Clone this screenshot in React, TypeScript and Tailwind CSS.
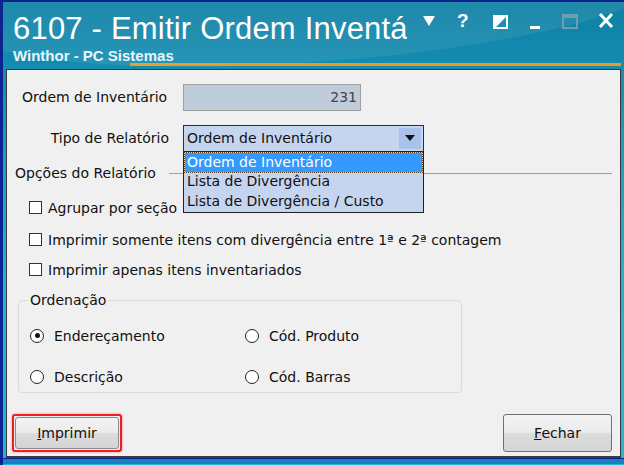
import React from "react";

const font = { fontFamily: '"Liberation Sans", Arial, sans-serif' };
const uiFont = { fontFamily: '"DejaVu Sans", Verdana, sans-serif' };

function Checkbox({ label }: { label: string }) {
  return (
    <div className="flex items-center h-[20px]">
      <div className="w-[13px] h-[13px] border border-[#333] bg-white ml-[22px]" />
      <span className="ml-[6px] pt-[1px] text-[14px] text-[#111] leading-none">{label}</span>
    </div>
  );
}

function Radio({ label, checked }: { label: string; checked?: boolean }) {
  return (
    <div className="flex items-center">
      <div className="w-[14px] h-[14px] rounded-full border border-[#222] bg-white flex items-center justify-center">
        {checked && <div className="w-[5px] h-[5px] rounded-full bg-[#111]" />}
      </div>
      <span className="ml-[10px] pt-[1px] text-[14px] text-[#111] leading-none">{label}</span>
    </div>
  );
}

export default function App() {
  return (
    <div
      className="w-[624px] h-[465px] relative overflow-hidden bg-[#1c9cc0] border-l-[3px] border-t-[2px] border-[#0b2490]"
      style={font}
    >
      {/* title background */}
      <div className="absolute inset-0 bg-[linear-gradient(180deg,#0e7fa3_0%,#1a9cc0_30%,#22b3d3_60%,#22b6d6_100%)]" />
      <div className="absolute left-[-40px] top-[-60px] w-[700px] h-[120px] rounded-[50%] bg-[#ffffff14] rotate-[-4deg]" />
      <div className="relative h-[61px] flex">
        <div className="pl-[10px] pt-[8px] flex flex-col w-[404px] overflow-hidden whitespace-nowrap">
          <div className="text-white text-[31px] leading-[37px] tracking-[0.2px]">6107 - Emitir Ordem Inventário</div>
          <div className="text-[#e8f6fb] text-[15px] font-bold leading-[18px]">Winthor - PC Sistemas</div>
        </div>
        <div className="flex items-start pt-[9px] text-white">
          <div className="ml-[15px] mt-[4px]">
            <svg width="14" height="12" viewBox="0 0 14 12"><path d="M1 1 H13 L7 11 Z" fill="white" /></svg>
          </div>
          <div className="ml-[21px] text-[19px] font-bold leading-[20px]">?</div>
          <div className="ml-[23px] mt-[3px]">
            <svg width="17" height="16" viewBox="0 0 17 16">
              <rect x="1" y="1" width="15" height="14" fill="white" />
              <path d="M14 3 V13 H4 Z" fill="#1b8fb3" />
            </svg>
          </div>
          <div className="ml-[21px] mt-[15px] w-[10px] h-[3px] bg-white" />
          <div className="ml-[22px] mt-[3px] w-[16px] h-[15px] border-[2px] border-t-[4px] border-[#6d9dae]" />
          <div className="ml-[20px] mt-[1px]">
            <svg width="16" height="17" viewBox="0 0 16 17">
              <path d="M2 2 L14 15 M14 2 L2 15" stroke="white" strokeWidth="3" />
            </svg>
          </div>
        </div>
      </div>
      <div className="relative h-[3px] ml-[127px] mr-[3px] bg-[linear-gradient(90deg,#f0a028,#f39a1c_20%,#f39a1c)]" />
      <div className="relative h-[3px]" />

      {/* panel */}
      <div className="relative ml-[3px] mr-[3px] h-[389px] bg-[#f0f0f0] border border-[#3a3a3a] border-b-[2px] text-[#111]" style={uiFont}>
        {/* row 1 */}
        <div className="flex items-center mt-[14px] h-[27px]">
          <span className="ml-[15px] w-[161px] text-[14px]">Ordem de Inventário</span>
          <div className="w-[178px] h-[27px] bg-[#bfcddb] border border-[#a0a0a0] flex items-center justify-end pr-[3px] text-[14px] text-[#444]">
            231
          </div>
        </div>
        {/* row 2 */}
        <div className="flex items-center mt-[14px] h-[26px] relative">
          <span className="w-[176px] pr-[14px] text-right text-[14px]">Tipo de Relatório</span>
          <div className="w-[241px] h-[27px] bg-[#c6d5ef] border border-[#1f2a70] flex items-center justify-between pl-[3px] pr-[2px] text-[14px]">
            <span>Ordem de Inventário</span>
            <div className="w-[22px] h-[21px] bg-[#a9c2ea] flex items-center justify-center">
              <svg width="10" height="6" viewBox="0 0 10 6"><path d="M0 0 H10 L5 6 Z" fill="#111" /></svg>
            </div>
          </div>
          {/* dropdown list */}
          <div className="absolute left-[176px] top-[26px] w-[241px] h-[62px] bg-[#c6d5ef] border border-[#222] z-10 text-[14px] leading-[19px] pt-[1px] pl-[1px] pr-[1px]">
            <div className="bg-[#3399ff] text-white outline-dotted outline-1 outline-[#5a3a10] pl-[2px] h-[19px]">Ordem de Inventário</div>
            <div className="pl-[2px] h-[20px]">Lista de Divergência</div>
            <div className="pl-[2px] h-[19px]">Lista de Divergência / Custo</div>
          </div>
        </div>
        {/* opções */}
        <div className="flex items-center mt-[12px] h-[20px]">
          <span className="ml-[8px] text-[14px]">Opções do Relatório</span>
          <div className="ml-[13px] flex-1 mr-[8px] h-[1px] bg-[#a0a0a0]" />
        </div>
        <div className="mt-[14px] flex flex-col gap-[12px]">
          <Checkbox label="Agrupar por seção" />
          <Checkbox label="Imprimir somente itens com divergência entre 1ª e 2ª contagem" />
          <div className="-mt-[2px]">
            <Checkbox label="Imprimir apenas itens inventariados" />
          </div>
        </div>
        {/* ordenação */}
        <div className="relative ml-[11px] mt-[21px] w-[444px] h-[93px] border border-[#d8dde2] rounded-[4px]">
          <span className="absolute left-[10px] -top-[10px] bg-[#f0f0f0] px-[1px] text-[14px] leading-[18px]">Ordenação</span>
          <div className="grid grid-cols-[215px_1fr] pl-[11px] pt-[27px] gap-y-[26px]">
            <Radio label="Endereçamento" checked />
            <Radio label="Cód. Produto" />
            <Radio label="Descrição" />
            <Radio label="Cód. Barras" />
          </div>
        </div>
        {/* buttons */}
        <div className="flex justify-between items-center mt-[21px] ml-[5px] mr-[8px]">
          <div className="w-[110px] h-[38px] border-[2px] border-[#ee1c24] rounded-[3px] p-[1px] shadow-[0_0_2px_#ff6060]">
            <div className="w-full h-full rounded-[3px] border border-[#8a8a8a] bg-[linear-gradient(180deg,#f3f3f3_0%,#ebebeb_48%,#dcdcdc_52%,#d4d4d4_100%)] flex items-center justify-center text-[14px]">
              <span><span className="underline">I</span>mprimir</span>
            </div>
          </div>
          <div className="w-[109px] h-[38px] rounded-[3px] border border-[#707070] bg-[linear-gradient(180deg,#f3f3f3_0%,#ebebeb_48%,#dcdcdc_52%,#d4d4d4_100%)] flex items-center justify-center text-[14px]">
            <span><span className="underline">F</span>echar</span>
          </div>
        </div>
      </div>
      <div className="relative h-[6px] bg-[#1a7fc0] border-t border-[#0b2490]" />
    </div>
  );
}
